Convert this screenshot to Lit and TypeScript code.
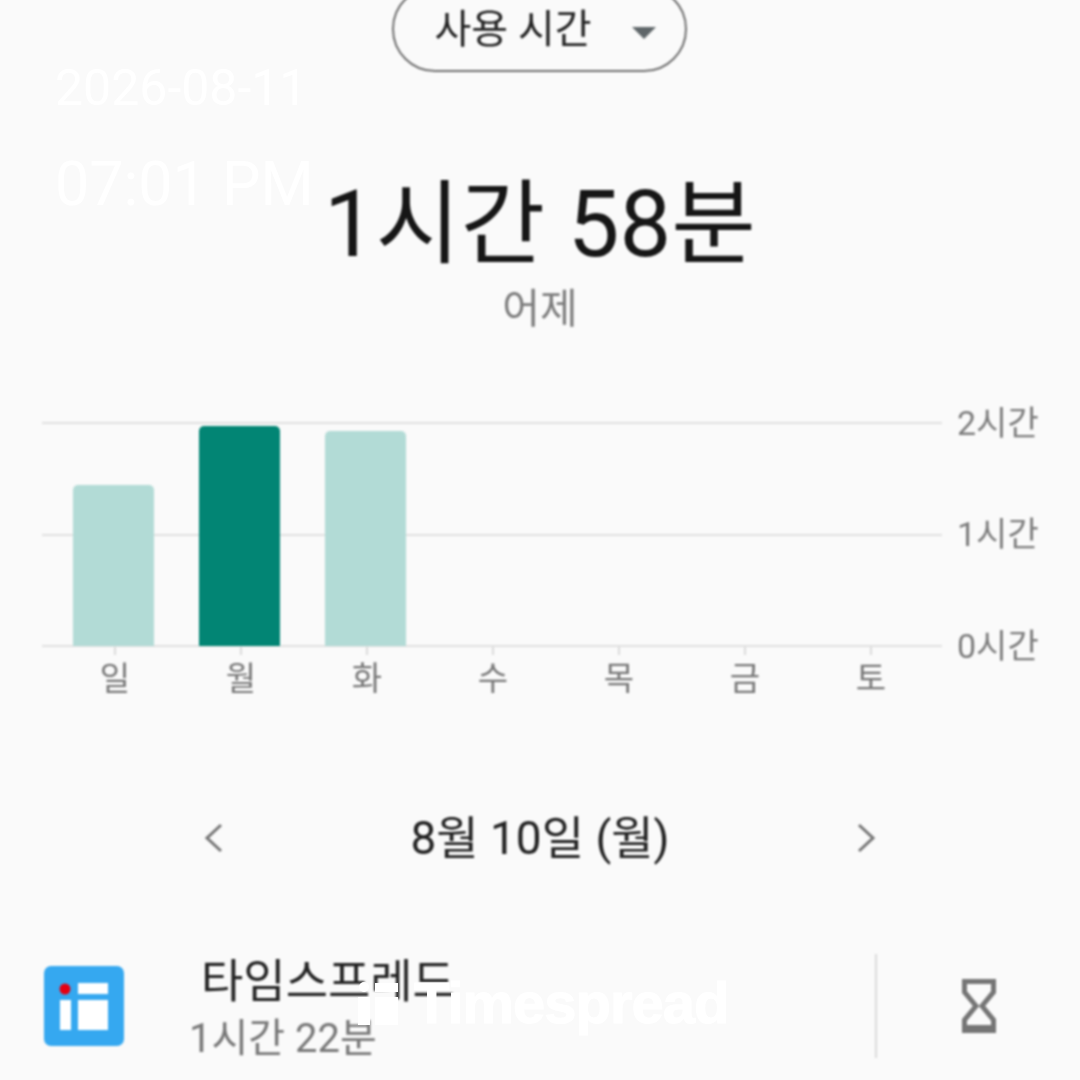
import { LitElement, html, css } from "lit";
import { customElement } from "lit/decorators.js";

const DAYS = [
  { label: "일", h: 161, active: false },
  { label: "월", h: 220, active: true },
  { label: "화", h: 215, active: false },
  { label: "수", h: 0, active: false },
  { label: "목", h: 0, active: false },
  { label: "금", h: 0, active: false },
  { label: "토", h: 0, active: false },
];

@customElement("app-root")
export class AppRoot extends LitElement {
  static styles = css`
    :host {
      display: block;
      width: 1080px;
      height: 1080px;
      overflow: hidden;
      position: relative;
      background: #fafafa;
      font-family: Roboto, "Noto Sans CJK KR", sans-serif;
      color: #1c1c1c;
    }
    .page { display: flex; flex-direction: column; align-items: center; filter: blur(0.8px); }
    .pill {
      box-sizing: border-box;
      margin: -14px 0 0 -2px;
      width: 295px;
      height: 86px;
      border: 2px solid #6f6f6f;
      border-radius: 43px;
      display: flex;
      align-items: center;
      padding: 0 0 6px 41px;
      font-size: 40px;
      color: #222;
      white-space: nowrap;
    }
    .caret {
      width: 0; height: 0;
      margin-left: 40px;
      margin-top: 14px;
      border-left: 12px solid transparent;
      border-right: 12px solid transparent;
      border-top: 12px solid #5f6669;
    }
    .total { margin-top: 103px; font-size: 92px; line-height: 100px; white-space: nowrap; color: #161616; }
    .when { margin-top: 10px; font-size: 41px; line-height: 48px; color: #7c7c7c; }
    .chart { align-self: stretch; margin: 89px 0 0 42px; display: grid; grid-template-columns: 900px auto; column-gap: 15px; }
    .plot { display: grid; grid-template-columns: 900px; height: 225px; }
    .lines, .bars { grid-area: 1 / 1; }
    .lines { display: flex; flex-direction: column; justify-content: space-between; }
    .lines i { display: block; height: 2px; background: #e0e0e0; }
    .bars { display: grid; grid-template-columns: repeat(7, 126px); align-items: end; padding: 0 0 1px 31px; }
    .bar { width: 81px; background: #b2dbd6; border-radius: 5px 5px 0 0; }
    .bar.active { background: #028574; }
    .yaxis { display: flex; flex-direction: column; justify-content: space-between; height: 225px; margin-top: -3px; }
    .yaxis span { height: 2px; display: flex; align-items: center; font-size: 34px; color: #7c7c7c; white-space: nowrap; }
    .days { grid-column: 1; display: grid; grid-template-columns: repeat(7, 126px); padding-left: 10px; }
    .day { display: flex; flex-direction: column; align-items: center; font-size: 33px; line-height: 38px; color: #777; width: 126px; }
    .day b { display: block; width: 2px; height: 8px; margin-bottom: 5px; background: #dcdcdc; }
    .date { margin-top: 112px; width: 672px; display: flex; justify-content: space-between; align-items: center; font-size: 46px; line-height: 56px; color: #222; }
    .date svg { display: block; }
    .row { align-self: stretch; margin-top: 84px; display: flex; align-items: center; padding-left: 44px; }
    .app { display: block; flex: none; }
    .names { flex: none; width: 751px; padding: 7px 0 0 65px; box-sizing: border-box; }
    .name { font-size: 46px; line-height: 48px; padding-left: 12px; color: #222; }
    .time { font-size: 40px; line-height: 46px; color: #777; margin-top: 11px; }
    .divider { width: 2px; height: 104px; background: #dcdcdc; flex: none; }
    .glass { margin-left: 85px; display: block; }
    .mark { position: absolute; color: #fff; white-space: nowrap; font-family: "Liberation Sans", sans-serif; }
    .mark.d { left: 55px; top: 58px; font-family: Roboto, sans-serif; font-size: 50px; line-height: 60px; }
    .mark.t { left: 55px; top: 148px; font-family: Roboto, sans-serif; font-size: 61px; line-height: 72px; }
    .brand { left: 358px; top: 975px; display: flex; align-items: center; gap: 16px; font-size: 58px; font-weight: 700; line-height: 56px; letter-spacing: -1px; -webkit-text-stroke: 1px #fff; }
    .brand svg { display: block; }
  `;

  render() {
    return html`
      <div class="page">
        <div class="pill">사용 시간<span class="caret"></span></div>
        <div class="total">1시간 58분</div>
        <div class="when">어제</div>
        <div class="chart">
          <div class="plot">
            <div class="lines"><i></i><i></i><i></i></div>
            <div class="bars">
              ${DAYS.map((d) => html`<div class="bar ${d.active ? "active" : ""}" style="height:${d.h}px"></div>`)}
            </div>
          </div>
          <div class="yaxis"><span>2시간</span><span>1시간</span><span>0시간</span></div>
          <div class="days">
            ${DAYS.map((d) => html`<div class="day"><b></b>${d.label}</div>`)}
          </div>
        </div>
        <div class="date">
          <svg width="20" height="30" viewBox="0 0 20 30"><path d="M17 2 L3 15 L17 28" fill="none" stroke="#757575" stroke-width="3"/></svg>
          <span>8월 10일 (월)</span>
          <svg width="20" height="30" viewBox="0 0 20 30"><path d="M3 2 L17 15 L3 28" fill="none" stroke="#757575" stroke-width="3"/></svg>
        </div>
        <div class="row">
          <svg class="app" width="80" height="80" viewBox="0 0 80 80">
            <rect width="80" height="80" rx="7" fill="#35a8f0"/>
            <rect x="16" y="34" width="11" height="30" fill="#fff"/>
            <rect x="34" y="17" width="30" height="11" fill="#fff"/>
            <rect x="34" y="34" width="30" height="30" fill="#fff"/>
            <circle cx="21" cy="23" r="5.5" fill="#e60012"/>
          </svg>
          <div class="names">
            <div class="name">타임스프레드</div>
            <div class="time">1시간 22분</div>
          </div>
          <div class="divider"></div>
          <svg class="glass" width="34" height="54" viewBox="0 0 34 54">
            <path d="M2.5 2.5 H31.5 V13 L20 27 L31.5 41 V51.5 H2.5 V41 L14 27 L2.5 13 Z" fill="none" stroke="#757575" stroke-width="5"/>
            <path d="M5 46 H29 V51 H5 Z" fill="#757575"/>
          </svg>
        </div>
      </div>
      <div class="mark d">2026-08-11</div>
      <div class="mark t">07:01 PM</div>
      <div class="mark brand">
        <svg width="40" height="44" viewBox="0 0 40 44">
          <rect x="0" y="16" width="12" height="28" fill="#fff"/>
          <rect x="17" y="2" width="23" height="9" fill="#fff"/>
          <rect x="17" y="16" width="23" height="28" fill="#fff"/>
          <circle cx="6" cy="6" r="5" fill="#fff"/>
        </svg>
        <span>Timespread</span>
      </div>
    `;
  }
}
